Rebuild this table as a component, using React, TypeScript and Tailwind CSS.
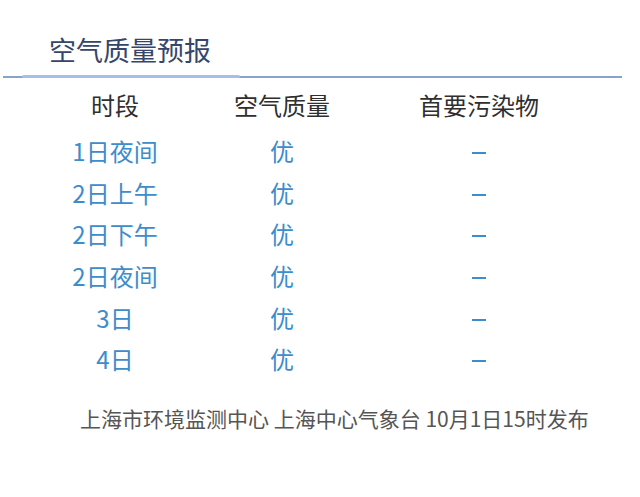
import React from "react";

const rows = ["1日夜间", "2日上午", "2日下午", "2日夜间", "3日", "4日"];

export default function App() {
  return (
    <div
      className="w-[640px] h-[497px] bg-white overflow-hidden"
      style={{ fontFamily: '"Noto Sans CJK SC", "Noto Sans", sans-serif' }}
    >
      <div className="pt-[30px] pl-[49px] h-[74px]">
        <div className="text-[27px] leading-[40px] text-[#36466a]">空气质量预报</div>
      </div>
      <div className="relative ml-[3px] w-[619px] h-[5px]">
        <div className="absolute left-0 right-0 top-[2px] h-[1.5px] bg-[#86a4c8]" />
        <div className="absolute left-[19px] w-[218px] top-[1px] h-[3px] bg-[#a3c1e6] rounded-sm" />
      </div>
      <div className="grid grid-cols-[160px_174px_220px] pl-[35px] pt-[1px]">
        <div className="h-[50.4px] flex items-center justify-center text-[24px] text-[#2f2f2f]">时段</div>
        <div className="h-[50.4px] flex items-center justify-center text-[24px] text-[#2f2f2f]">空气质量</div>
        <div className="h-[50.4px] flex items-center justify-center text-[24px] text-[#2f2f2f]">首要污染物</div>
        {rows.map((r) => (
          <React.Fragment key={r}>
            <div className="h-[41.6px] flex items-center justify-center text-[24px] text-[#3d8ccc]">{r}</div>
            <div className="h-[41.6px] flex items-center justify-center text-[24px] text-[#3d8ccc]">优</div>
            <div className="h-[41.6px] flex items-center justify-center pt-[4px]">
              <div className="w-[14px] h-[2px] bg-[#3d8ccc]" />
            </div>
          </React.Fragment>
        ))}
      </div>
      <div className="pl-[80px] pt-[24px] text-[21px] leading-[28px] text-[#555555] whitespace-nowrap">
        上海市环境监测中心 上海中心气象台 10月1日15时发布
      </div>
    </div>
  );
}
